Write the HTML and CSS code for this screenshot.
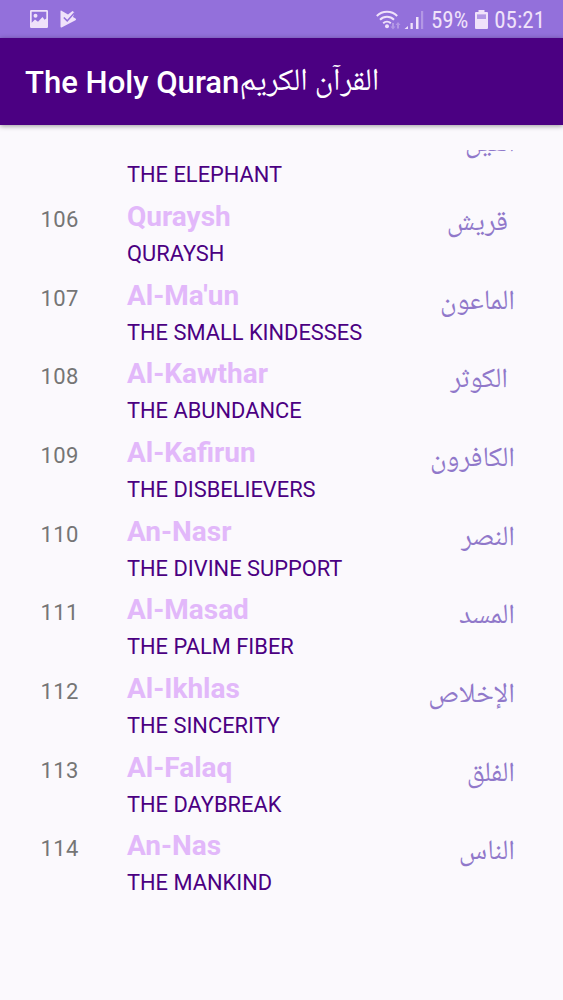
FILE: index.html
```
<!DOCTYPE html>
<html lang="en">
<head>
    <meta charset="UTF-8">
    <meta name="viewport" content="width=device-width, initial-scale=1.0">
    <title>The Holy Quran</title>
    <link rel="stylesheet" href="styles.css">
</head>
<body>
    <div class="status-bar">
        <svg class="icon-image" width="18" height="18" viewBox="0 0 18 18">
            <path fill-rule="evenodd" d="M1.200 0h15.600A1.200 1.200 0 0 1 18 1.200v15.600a1.200 1.200 0 0 1-1.200 1.200H1.200A1.200 1.200 0 0 1 0 16.800V1.200A1.200 1.200 0 0 1 1.200 0zM1.700 1.700v11L5 9.500l3 2.300L12.500 7l2 2.800 1.800-1.300V1.700zM5.500 3.800a2 2 0 1 1 0 4 2 2 0 0 1 0-4z"/>
        </svg>
        <svg class="icon-play" width="17" height="18" viewBox="0 0 17 18">
            <path d="M.5 1.200C.5.500 1 .500 1.500.800L8 4.500 12.500 1l2 1.500L13 7l2.500 1.500c.8.500.8 1.200 0 1.700l-13.500 7c-.9.500-1.500.300-1.500-.7z"/>
            <path class="check" d="M3.800 7.500l3.400 3.400 7.500-8.400"/>
        </svg>
        <div class="indicators">
            <svg class="icon-signal" width="50" height="20" viewBox="0 0 50 20">
                <g class="waves">
                    <path d="M.8 6a14.500 14.500 0 0 1 20.400 0"/>
                    <path d="M4 9.700a10 10 0 0 1 14 0"/>
                    <path d="M7.200 13.200a5.600 5.600 0 0 1 7.600 0"/>
                </g>
                <circle cx="11" cy="16.300" r="2"/>
                <g class="faint"><path d="M16 13h2v3.500h1.500L17 19.500l-2.500-3H16zM21 18.500h2V15h1.500L22 12l-2.500 3H21z"/><path d="M45 1h2.200v18H45z"/></g>
                <path d="M28.500 19l3.500-3v3zM34.500 13h2.300v6h-2.300zM40 7h2.500v12H40z"/>
            </svg>
            <span class="percent">59%</span>
            <svg class="icon-battery" width="13" height="20" viewBox="0 0 13 20">
                <path class="faint" d="M2 4.500h9V9H2z"/>
                <path fill-rule="evenodd" d="M3.500 0h6v2H12a1 1 0 0 1 1 1v15a1 1 0 0 1-1 1H1a1 1 0 0 1-1-1V3a1 1 0 0 1 1-1h2.500zM2 4.500V9h9V4.500z"/>
            </svg>
            <span class="clock">05:21</span>
        </div>
    </div>

    <div class="app-bar">
        <h1>The Holy Quran</h1><span class="title-ar" lang="ar" dir="rtl">القرآن الكريم</span>
    </div>

    <div class="surah-list">
        <div class="surah">
            <div class="number"></div>
            <div class="names"><div class="name"></div><div class="meaning">THE ELEPHANT</div></div>
            <div class="arabic" lang="ar" dir="rtl">الفيل</div>
        </div>
        <div class="surah">
            <div class="number">106</div>
            <div class="names"><div class="name">Quraysh</div><div class="meaning">QURAYSH</div></div>
            <div class="arabic inset" lang="ar" dir="rtl">قريش</div>
        </div>
        <div class="surah">
            <div class="number">107</div>
            <div class="names"><div class="name">Al-Ma'un</div><div class="meaning">THE SMALL KINDESSES</div></div>
            <div class="arabic" lang="ar" dir="rtl">الماعون</div>
        </div>
        <div class="surah">
            <div class="number">108</div>
            <div class="names"><div class="name">Al-Kawthar</div><div class="meaning">THE ABUNDANCE</div></div>
            <div class="arabic inset" lang="ar" dir="rtl">الكوثر</div>
        </div>
        <div class="surah">
            <div class="number">109</div>
            <div class="names"><div class="name">Al-Kafirun</div><div class="meaning">THE DISBELIEVERS</div></div>
            <div class="arabic" lang="ar" dir="rtl">الكافرون</div>
        </div>
        <div class="surah">
            <div class="number">110</div>
            <div class="names"><div class="name">An-Nasr</div><div class="meaning">THE DIVINE SUPPORT</div></div>
            <div class="arabic" lang="ar" dir="rtl">النصر</div>
        </div>
        <div class="surah">
            <div class="number">111</div>
            <div class="names"><div class="name">Al-Masad</div><div class="meaning">THE PALM FIBER</div></div>
            <div class="arabic" lang="ar" dir="rtl">المسد</div>
        </div>
        <div class="surah">
            <div class="number">112</div>
            <div class="names"><div class="name">Al-Ikhlas</div><div class="meaning">THE SINCERITY</div></div>
            <div class="arabic" lang="ar" dir="rtl">الإخلاص</div>
        </div>
        <div class="surah">
            <div class="number">113</div>
            <div class="names"><div class="name">Al-Falaq</div><div class="meaning">THE DAYBREAK</div></div>
            <div class="arabic" lang="ar" dir="rtl">الفلق</div>
        </div>
        <div class="surah">
            <div class="number">114</div>
            <div class="names"><div class="name">An-Nas</div><div class="meaning">THE MANKIND</div></div>
            <div class="arabic" lang="ar" dir="rtl">الناس</div>
        </div>
    </div>
</body>
</html>
```
FILE: styles.css
```
* {
    box-sizing: border-box;
}

body {
    margin: 0;
    height: 1000px;
    overflow: hidden;
    background-color: #fbf9fd;
    font-family: Roboto, sans-serif;
}

.status-bar {
    display: flex;
    align-items: center;
    height: 38px;
    padding: 0 18px 0 30px;
    background-color: #9370db;
    color: #f0e2fa;
    fill: #f0e2fa;
}

.icon-play {
    margin-left: 12px;
}

.check {
    fill: none;
    stroke: #9370db;
    stroke-width: 1.5;
}

.indicators {
    display: flex;
    align-items: center;
    margin-left: auto;
    font-family: "Roboto Condensed", Roboto, sans-serif;
    font-stretch: condensed;
    font-size: 23px;
    line-height: 38px;
}

.icon-signal,
.icon-battery {
    margin-top: 1px;
}

.waves {
    fill: none;
    stroke: #f0e2fa;
    stroke-width: 2;
}

.faint {
    opacity: 0.35;
}

.percent {
    margin: 3px 7px 0 5px;
}

.clock {
    margin: 3px 0 0 6px;
}

.app-bar {
    display: flex;
    align-items: center;
    height: 87px;
    padding-left: 25px;
    background-color: #4b0082;
    color: #fff;
    box-shadow: 0 1px 5px rgba(0, 0, 0, 0.4);
}

h1 {
    margin: 2px 0 0;
    font-size: 31.1px;
    font-weight: 500;
}

.title-ar {
    font-family: "Noto Naskh Arabic UI", "Noto Naskh Arabic", "DejaVu Sans", sans-serif;
    font-size: 31.3px;
}

.surah-list {
    height: 755px;
    margin-top: 25px;
    overflow: hidden;
    display: flex;
    flex-direction: column;
    justify-content: flex-end;
}

.surah {
    display: flex;
    flex: none;
    height: 78.67px;
    padding: 0 48px 0 40.5px;
}

.number {
    width: 86.5px;
    padding-top: 7px;
    color: #757575;
    font-size: 22px;
    line-height: 32.5px;
    letter-spacing: 0.4px;
}

.name {
    height: 38px;
    padding-top: 4px;
    color: #e2b8fa;
    font-size: 28px;
    font-weight: 700;
    line-height: 32.4px;
}

.meaning {
    color: #4b0082;
    font-size: 21.85px;
    line-height: 37px;
}

.arabic {
    margin-left: auto;
    padding-top: 9px;
    color: #9078ca;
    font-family: "Noto Naskh Arabic UI", "Noto Naskh Arabic", "DejaVu Sans", sans-serif;
    font-size: 28px;
    line-height: 34px;
}

.inset {
    padding-right: 7px;
}
```
